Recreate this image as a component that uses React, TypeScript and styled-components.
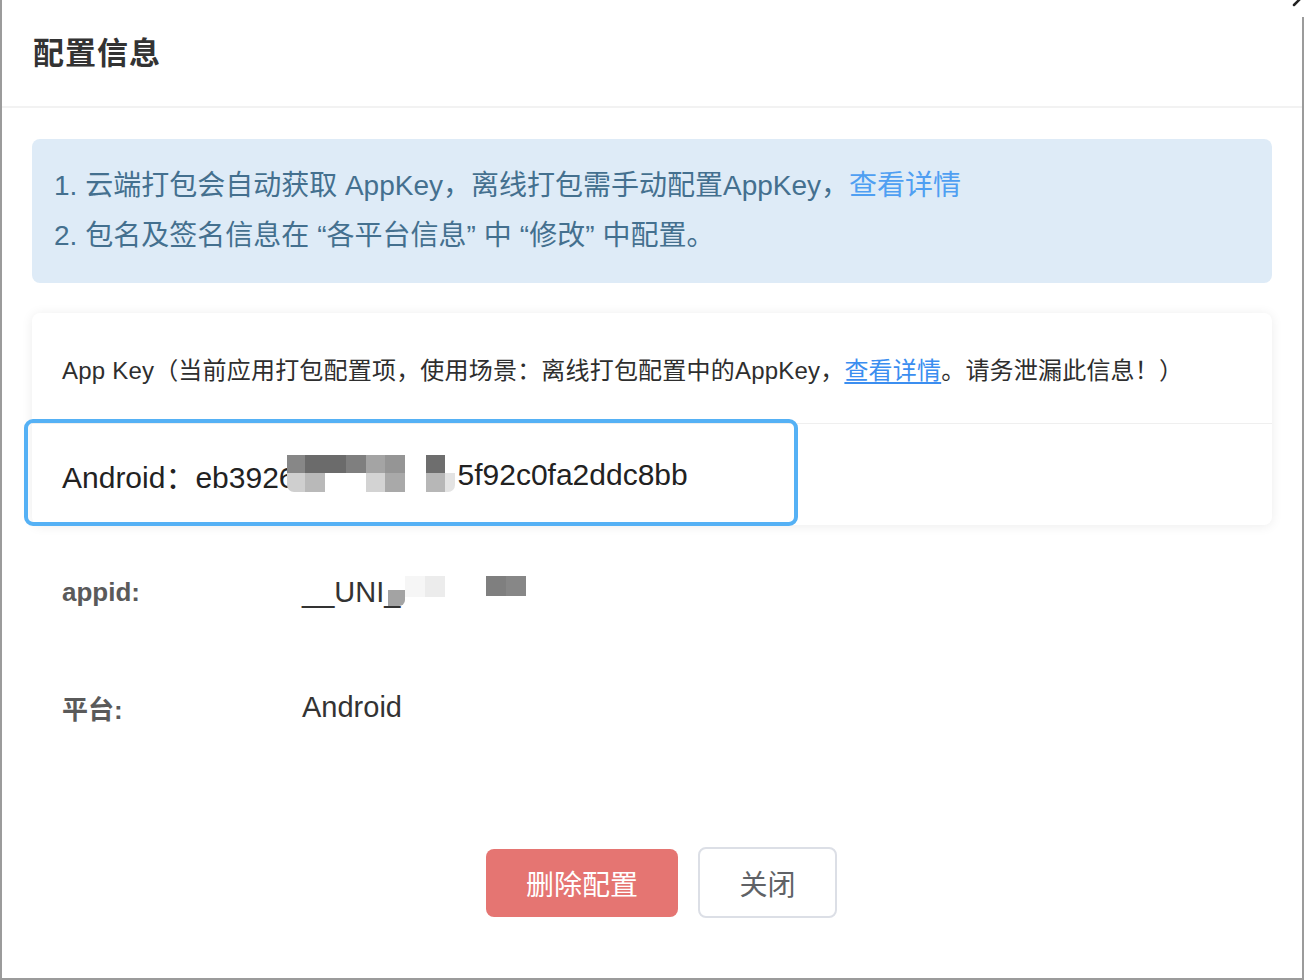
import React from "react";
import styled, { createGlobalStyle } from "styled-components";

const Global = createGlobalStyle`
  html, body { margin: 0; padding: 0; background: #fff; }
  body { font-family: "Liberation Sans", "Noto Sans CJK SC", sans-serif; }
  * { box-sizing: border-box; }
`;

const Dialog = styled.div`
  position: relative;
  width: 1304px;
  height: 980px;
  background: #fff;
  border-left: 2px solid #9b9b9b;
  border-right: 2px solid #9b9b9b;
  border-bottom: 2px solid #9b9b9b;
  display: flex;
  flex-direction: column;
`;

const CloseCorner = styled.div`
  position: absolute;
  top: 0;
  right: -3px;
  width: 14px;
  height: 17px;
  background: #fff;
`;

const Header = styled.div`
  height: 108px;
  display: flex;
  align-items: center;
  padding-left: 31px;
  padding-bottom: 6px;
  border-bottom: 2px solid #f2f2f2;
`;

const Title = styled.h2`
  margin: 0;
  font-size: 31px;
  font-weight: 600;
  color: #333;
  letter-spacing: 1px;
`;

const Body = styled.div`
  padding: 31px 30px 0 30px;
  display: flex;
  flex-direction: column;
`;

const Alert = styled.div`
  height: 144px;
  border-radius: 8px;
  background: #deebf7;
  padding: 22px 22px;
  font-size: 28px;
  line-height: 50px;
  color: #44708f;
`;

const AlertLine = styled.div`
  white-space: nowrap;
`;

const Quote = styled.span<{ $open?: boolean }>`
  margin-left: ${(p) => (p.$open ? "8px" : "0")};
  margin-right: ${(p) => (p.$open ? "0" : "8px")};
`;

const Link = styled.a<{ $underline?: boolean }>`
  color: ${(p) => (p.$underline ? "#3b8ef0" : "#4f9ff2")};
  text-decoration: ${(p) => (p.$underline ? "underline" : "none")};
  text-underline-offset: 3px;
  cursor: pointer;
`;

const Card = styled.div`
  margin-top: 30px;
  border-radius: 8px;
  background: #fff;
  box-shadow: 0 1px 12px rgba(0, 0, 0, 0.08);
`;

const CardHeader = styled.div`
  height: 111px;
  display: flex;
  align-items: center;
  padding-left: 30px;
  border-bottom: 1px solid #efefef;
  font-size: 24px;
  letter-spacing: 0.2px;
  color: #2e2e2e;
  white-space: nowrap;
`;

const KeyRow = styled.div`
  position: relative;
  height: 101px;
  display: flex;
  align-items: center;
  padding-left: 30px;
  font-size: 30px;
  color: #222;
  white-space: nowrap;
`;

const Highlight = styled.div`
  position: absolute;
  left: -8px;
  top: -5px;
  width: 774px;
  height: 107px;
  border: 4px solid #55b1f5;
  border-radius: 9px;
  pointer-events: none;
`;

const Mosaic = styled.div<{ $shift: number }>`
  display: flex;
  flex-direction: column;
  margin-left: ${(p) => p.$shift}px;
  margin-right: 3px;
  margin-top: -3px;
  position: relative;
`;

const MosaicRow = styled.div<{ $h: number }>`
  display: flex;
  height: ${(p) => p.$h}px;
`;

const Cell = styled.div<{ $w: number; $c: string; $r?: string }>`
  width: ${(p) => p.$w}px;
  height: 100%;
  background: ${(p) => p.$c};
  border-radius: ${(p) => p.$r || "0"};
`;

const InfoList = styled.div`
  padding-top: 10px;
  display: flex;
  flex-direction: column;
`;

const InfoRow = styled.div`
  height: 115px;
  display: flex;
  align-items: center;
  padding-left: 30px;
`;

const Label = styled.div`
  width: 240px;
  font-size: 26px;
  font-weight: 600;
  color: #5a5a5a;
`;

const Value = styled.div`
  display: flex;
  align-items: center;
  font-size: 29px;
  color: #333;
  white-space: nowrap;
`;

const AppidMosaic = styled.div`
  position: relative;
  display: flex;
  align-items: flex-start;
  height: 30px;
  margin-left: -12px;
  margin-top: -4px;
`;

const Footer = styled.div`
  margin-top: 82px;
  display: flex;
  justify-content: center;
  align-items: center;
  gap: 20px;
  padding-left: 19px;
`;

const DangerButton = styled.button`
  width: 192px;
  height: 68px;
  border: none;
  border-radius: 8px;
  background: #e57572;
  color: #fff;
  font-family: inherit;
  font-size: 28px;
  cursor: pointer;
`;

const PlainButton = styled.button`
  width: 139px;
  height: 71px;
  border: 2px solid #dcdfe6;
  border-radius: 8px;
  background: #fff;
  color: #606266;
  font-family: inherit;
  font-size: 28px;
  cursor: pointer;
`;

type C = { w: number; c: string; r?: string };
const keyTop: C[] = [
  { w: 18, c: "#878787" },
  { w: 20, c: "#6b6b6b" },
  { w: 21, c: "#6b6b6b" },
  { w: 20, c: "#7f7f7f" },
  { w: 19, c: "#a4a4a4" },
  { w: 20, c: "#959595" },
  { w: 21, c: "#ffffff" },
  { w: 19, c: "#6e6e6e" },
  { w: 10, c: "#ffffff" },
];
const keyBottom: C[] = [
  { w: 18, c: "#cfcfcf", r: "0 0 0 7px" },
  { w: 20, c: "#b9b9b9" },
  { w: 21, c: "#ffffff" },
  { w: 20, c: "#ffffff" },
  { w: 19, c: "#d3d3d3" },
  { w: 20, c: "#a9a9a9" },
  { w: 21, c: "#ffffff" },
  { w: 19, c: "#b7b7b7" },
  { w: 10, c: "#e3e3e3", r: "0 0 7px 0" },
];

function CloseStroke() {
  return (
    <svg width="14" height="17" viewBox="0 0 14 17">
      <path d="M3 5 L10 -2" stroke="#222" strokeWidth="2.5" strokeLinecap="round" />
    </svg>
  );
}

export default function App() {
  return (
    <>
      <Global />
      <Dialog>
        <CloseCorner>
          <CloseStroke />
        </CloseCorner>
        <Header>
          <Title>配置信息</Title>
        </Header>
        <Body>
          <Alert>
            <AlertLine>
              1. 云端打包会自动获取 AppKey，离线打包需手动配置AppKey，<Link>查看详情</Link>
            </AlertLine>
            <AlertLine>
              2. 包名及签名信息在<Quote $open>“</Quote>各平台信息<Quote>”</Quote>中
              <Quote $open>“</Quote>修改<Quote>”</Quote>中配置。
            </AlertLine>
          </Alert>
          <Card>
            <CardHeader>
              App Key（当前应用打包配置项，使用场景：离线打包配置中的AppKey，
              <Link $underline>查看详情</Link>。请务泄漏此信息！）
            </CardHeader>
            <KeyRow>
              <span>Android：eb3926</span>
              <Mosaic $shift={-9}>
                <MosaicRow $h={18}>
                  {keyTop.map((c, i) => (
                    <Cell key={i} $w={c.w} $c={c.c} $r={c.r} />
                  ))}
                </MosaicRow>
                <MosaicRow $h={19}>
                  {keyBottom.map((c, i) => (
                    <Cell key={i} $w={c.w} $c={c.c} $r={c.r} />
                  ))}
                </MosaicRow>
              </Mosaic>
              <span>5f92c0fa2ddc8bb</span>
              <Highlight />
            </KeyRow>
          </Card>
          <InfoList>
            <InfoRow>
              <Label>appid:</Label>
              <Value>
                <span>__UNI_</span>
                <AppidMosaic>
                  <MosaicRow $h={30}>
                    <Cell $w={17} $c="linear-gradient(to bottom, #fff 0, #fff 14px, #a3a3a3 14px)" $r="0 0 6px 0" />
                    <Cell $w={20} $c="linear-gradient(to bottom, #f6f6f6 0, #f6f6f6 21px, #fff 21px)" />
                    <Cell $w={20} $c="linear-gradient(to bottom, #ececec 0, #ececec 21px, #fff 21px)" />
                    <Cell $w={41} $c="transparent" />
                    <Cell $w={20} $c="linear-gradient(to bottom, #7f7f7f 0, #7f7f7f 20px, transparent 20px)" />
                    <Cell $w={20} $c="linear-gradient(to bottom, #878787 0, #878787 20px, transparent 20px)" />
                  </MosaicRow>
                </AppidMosaic>
              </Value>
            </InfoRow>
            <InfoRow>
              <Label>平台:</Label>
              <Value>Android</Value>
            </InfoRow>
          </InfoList>
          <Footer>
            <DangerButton>删除配置</DangerButton>
            <PlainButton>关闭</PlainButton>
          </Footer>
        </Body>
      </Dialog>
    </>
  );
}
